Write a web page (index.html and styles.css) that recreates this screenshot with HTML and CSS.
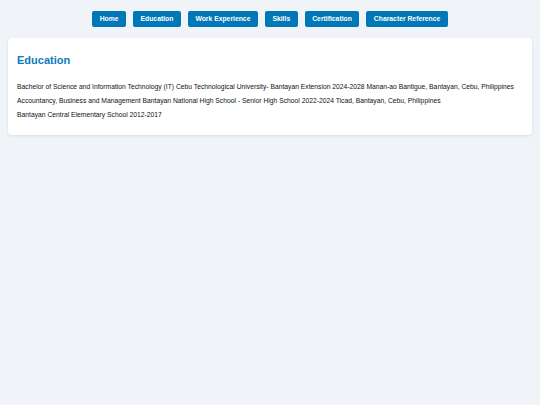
FILE: index.html
```html
<!DOCTYPE html>
<html>
<head>
<meta charset="utf-8">
<link rel="stylesheet" href="styles.css">
</head>
<body>
<nav class="nav">
  <a class="btn">Home</a>
  <a class="btn">Education</a>
  <a class="btn">Work Experience</a>
  <a class="btn">Skills</a>
  <a class="btn">Certification</a>
  <a class="btn">Character Reference</a>
</nav>
<section class="card">
  <h2 class="title">Education</h2>
  <p class="line">Bachelor of Science and Information Technology (IT) Cebu Technological University- Bantayan Extension 2024-2028 Manan-ao Bantigue, Bantayan, Cebu, Philippines</p>
  <p class="line">Accountancy, Business and Management Bantayan National High School - Senior High School 2022-2024 Ticad, Bantayan, Cebu, Philippines</p>
  <p class="line">Bantayan Central Elementary School 2012-2017</p>
</section>
</body>
</html>
```
FILE: styles.css
```css
html, body { margin: 0; }
body {
  background: #f0f4f8;
  font-family: "Liberation Sans", Arial, sans-serif;
  padding: 11px 8px;
}
.nav {
  display: flex;
  justify-content: center;
  gap: 7px;
  margin-bottom: 11px;
}
.btn {
  display: block;
  background: #0077b6;
  color: #fff;
  font-weight: bold;
  font-size: 6.8px;
  height: 16px;
  line-height: 16px;
  padding: 0 7.5px;
  border-radius: 2px;
}
.card {
  background: #fff;
  border-radius: 4px;
  box-shadow: 0 1px 3px rgba(0,0,0,0.1);
  padding: 16px 9px 11px;
}
.title {
  margin: 0 0 15px;
  font-size: 11px;
  line-height: 13px;
  color: #0a7bbd;
}
.line {
  margin: 0 0 4px;
  font-size: 6.75px;
  line-height: 10px;
  color: #111;
}
```
